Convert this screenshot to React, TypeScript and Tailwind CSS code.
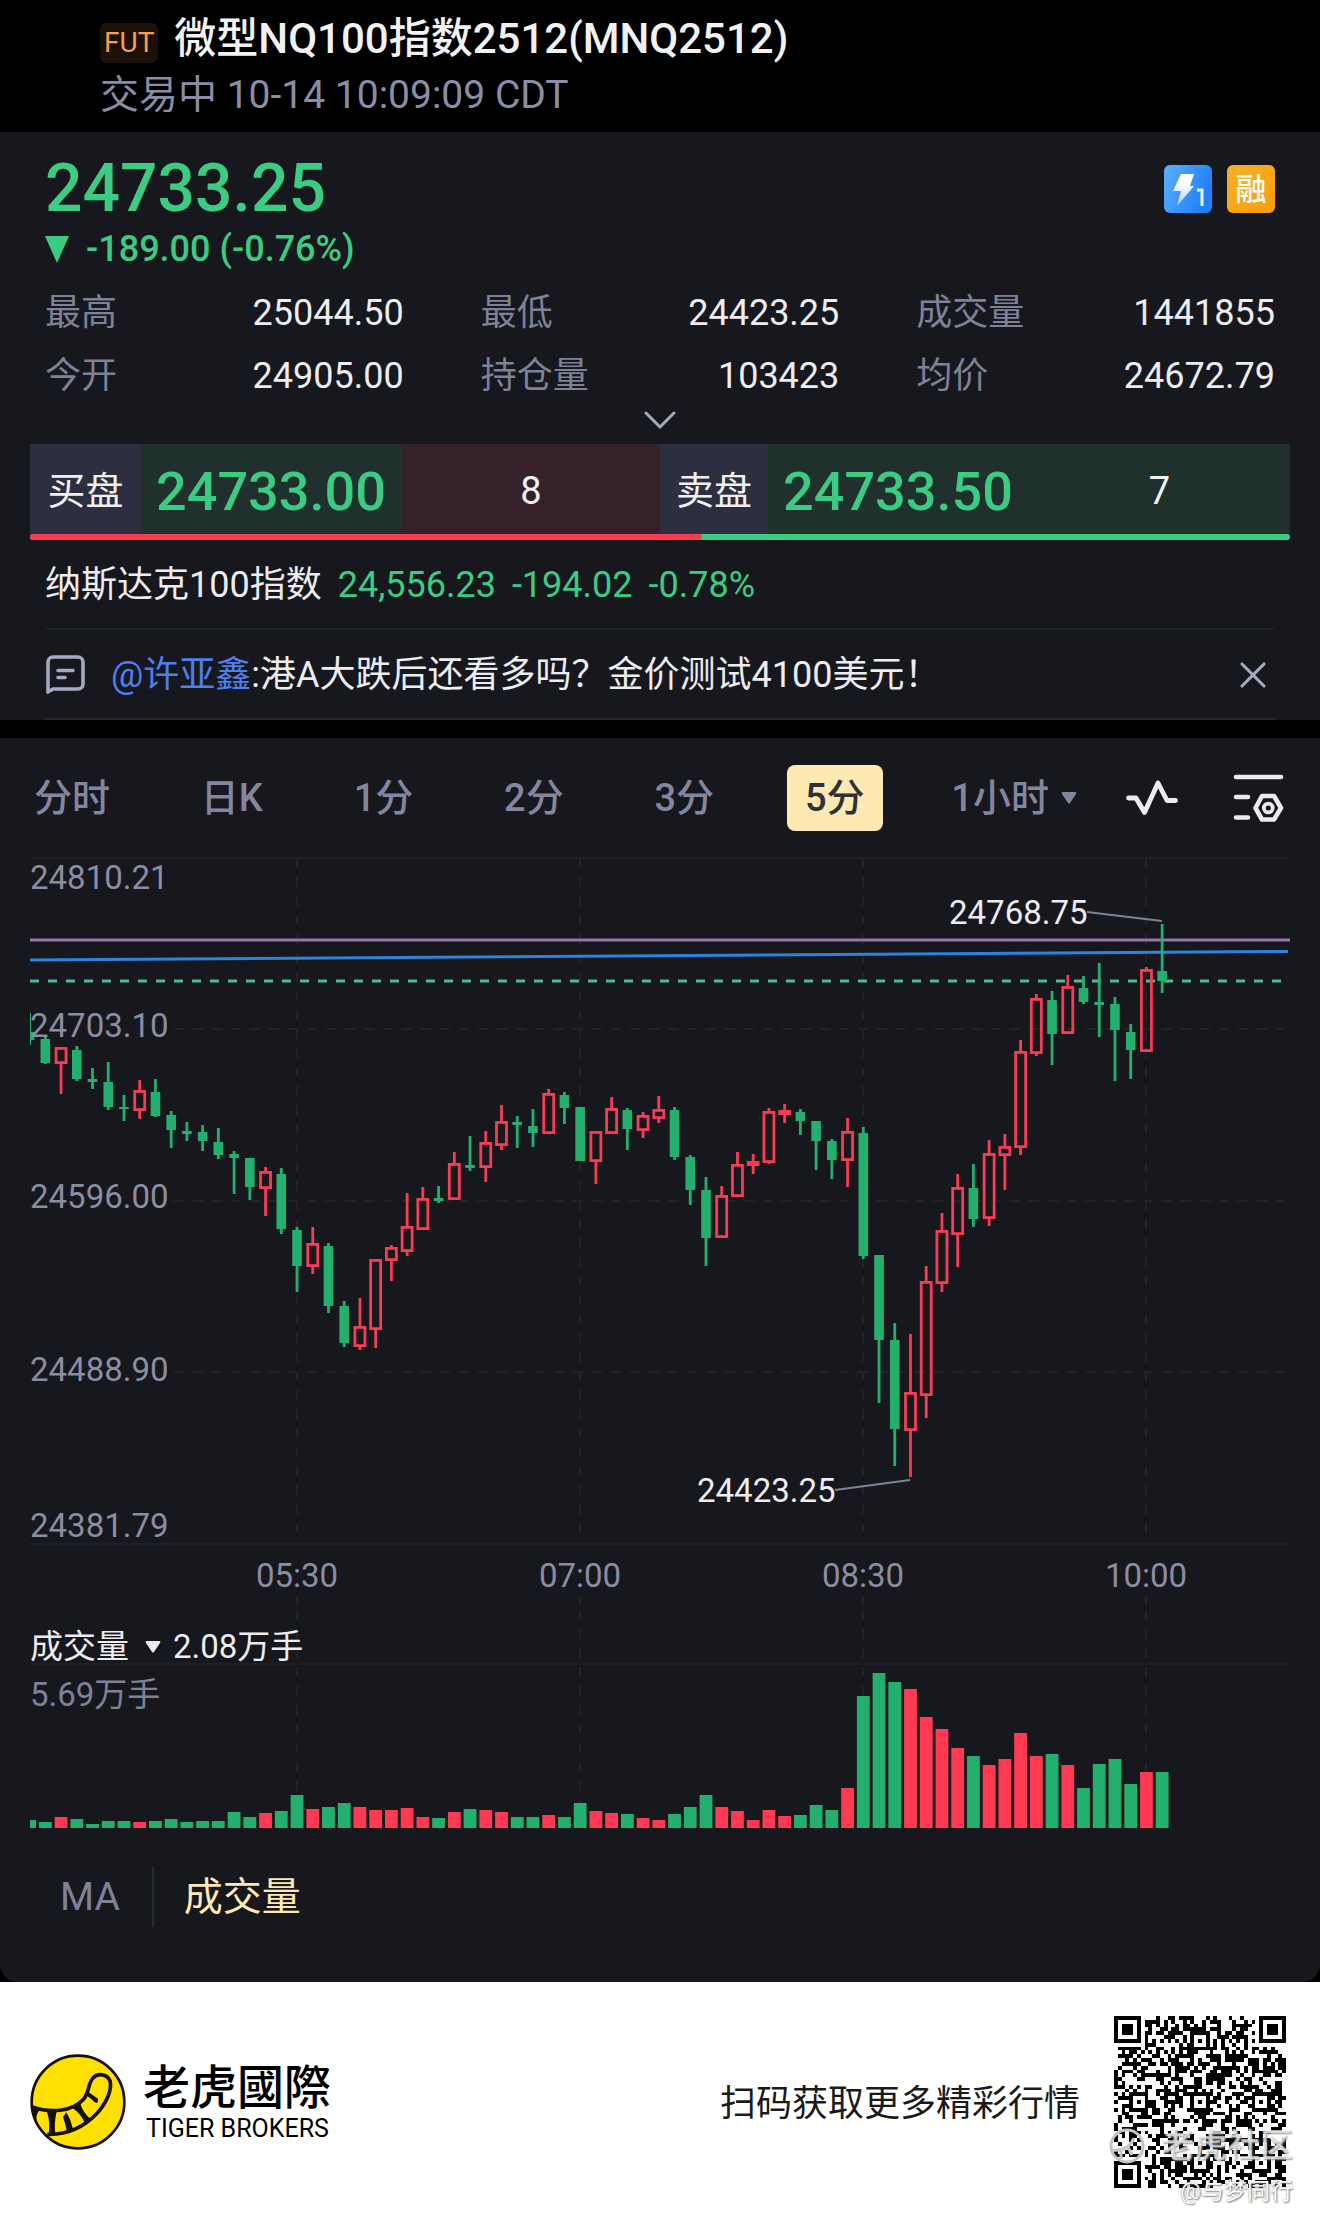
import { X } from 'lucide-react'

type Candle = {
  up?: boolean
  high: number
  top: number
  bottom: number
  low: number
  volume: number
}

const up = (high: number, top: number, bottom: number, low: number, volume: number): Candle => ({
  up: true,
  high,
  top,
  bottom,
  low,
  volume,
})

const down = (high: number, top: number, bottom: number, low: number, volume: number): Candle => ({
  high,
  top,
  bottom,
  low,
  volume,
})

// high, body top, body bottom, low, volume: all in chart units
const candles: Candle[] = [
  down(163, 182, 190, 195, 8),
  down(187, 189, 213, 214, 6),
  up(197, 197, 214, 244, 11),
  down(196, 200, 229, 231, 9),
  down(218, 229, 232, 239, 4),
  down(212, 232, 257, 260, 7),
  down(245, 257, 259, 271, 7),
  up(230, 240, 261, 269, 6),
  down(229, 242, 266, 267, 7),
  down(261, 265, 280, 298, 9),
  down(272, 281, 284, 291, 6),
  down(275, 282, 291, 301, 7),
  down(278, 292, 305, 309, 7),
  down(301, 304, 308, 344, 16),
  down(308, 308, 337, 350, 11),
  up(317, 321, 339, 366, 15),
  down(318, 324, 379, 384, 17),
  down(377, 380, 416, 442, 33),
  up(377, 393, 417, 424, 19),
  down(393, 396, 456, 463, 21),
  down(451, 456, 493, 497, 25),
  up(448, 476, 497, 500, 21),
  up(409, 409, 480, 498, 18),
  up(395, 397, 411, 431, 18),
  up(343, 376, 402, 406, 20),
  up(337, 348, 380, 380, 11),
  down(336, 348, 351, 353, 10),
  up(302, 313, 350, 350, 16),
  down(286, 315, 318, 321, 19),
  up(281, 292, 318, 332, 18),
  up(255, 271, 296, 300, 16),
  down(266, 272, 275, 298, 11),
  down(259, 276, 283, 297, 11),
  up(239, 243, 284, 284, 13),
  down(242, 245, 258, 274, 11),
  down(257, 257, 311, 311, 25),
  up(281, 281, 312, 334, 17),
  up(247, 258, 284, 284, 15),
  down(258, 260, 279, 300, 14),
  up(262, 265, 281, 288, 10),
  up(246, 259, 269, 273, 8),
  down(257, 260, 307, 310, 14),
  down(305, 307, 340, 355, 21),
  down(327, 340, 388, 416, 33),
  up(336, 345, 388, 388, 21),
  up(302, 314, 347, 347, 17),
  up(304, 311, 316, 324, 8),
  up(258, 261, 313, 314, 18),
  up(254, 260, 265, 273, 12),
  down(259, 262, 271, 285, 13),
  down(271, 271, 291, 320, 23),
  down(289, 291, 310, 329, 18),
  up(268, 281, 311, 337, 40),
  down(277, 283, 406, 409, 132),
  down(405, 405, 490, 553, 155),
  down(473, 490, 579, 616, 146),
  up(484, 542, 581, 627, 139),
  up(416, 431, 546, 568, 111),
  up(363, 380, 434, 442, 99),
  up(324, 337, 385, 417, 80),
  down(314, 338, 369, 377, 72),
  up(290, 303, 369, 376, 63),
  up(284, 296, 306, 340, 69),
  up(190, 201, 298, 305, 95),
  up(144, 148, 204, 206, 72),
  down(141, 150, 184, 215, 74),
  up(125, 136, 184, 184, 63),
  down(126, 138, 152, 154, 40),
  down(113, 152, 155, 187, 64),
  down(147, 154, 180, 231, 69),
  down(174, 182, 200, 229, 44),
  up(117, 119, 202, 202, 56),
  down(74, 121, 131, 143, 56),
]

const LEFT = 30
const RIGHT = 1290
const STEP = 15.73
const candleX = (i: number) => 29.6 + i * STEP

const stats = [
  { label: '最高', value: '25044.50' },
  { label: '最低', value: '24423.25' },
  { label: '成交量', value: '1441855' },
  { label: '今开', value: '24905.00' },
  { label: '持仓量', value: '103423' },
  { label: '均价', value: '24672.79' },
]

const periods = ['分时', '日K', '1分', '2分', '3分', '5分']

const priceLabels = [
  { text: '24810.21', y: 39 },
  { text: '24703.10', y: 187 },
  { text: '24596.00', y: 358 },
  { text: '24488.90', y: 531 },
  { text: '24381.79', y: 687 },
]

const times = [
  { text: '05:30', x: 297 },
  { text: '07:00', x: 580 },
  { text: '08:30', x: 863 },
  { text: '10:00', x: 1146 },
]

function Header() {
  return (
    <header className="flex h-[132px] flex-col pl-[100px] pt-3">
      <div className="flex h-[54px] items-center gap-4">
        <span className="mt-2 rounded-md bg-[#1c1107] px-1 text-[28px] leading-[40px] text-[#f7a04b]">FUT</span>
        <h1 className="whitespace-nowrap text-[42px] font-medium leading-[54px] text-[#f2f2f4]">
          微型NQ100指数2512(MNQ2512)
        </h1>
      </div>
      <p className="text-[39px] leading-[58px] text-[#8b8da6]">交易中 10-14 10:09:09 CDT</p>
    </header>
  )
}

function FlashBadge() {
  return (
    <svg viewBox="0 0 48 48" className="size-12" role="img" aria-label="L1">
      <defs>
        <linearGradient id="flash-bg" x1="0" y1="0" x2="1" y2="0.4">
          <stop offset="0" stopColor="#5db0ff" />
          <stop offset="1" stopColor="#1f80f8" />
        </linearGradient>
        <linearGradient id="flash-bolt" x1="0" y1="0" x2="0" y2="1">
          <stop offset="0.3" stopColor="#fff" />
          <stop offset="1" stopColor="#a9d2ff" />
        </linearGradient>
      </defs>
      <rect width="48" height="48" rx="6" fill="url(#flash-bg)" />
      <path d="M17 9h13l-4 12h4L13 41l4-15H9z" fill="url(#flash-bolt)" />
      <path d="M33 25h5v16" fill="none" stroke="#e8f3ff" strokeWidth="3" />
    </svg>
  )
}

function Quote() {
  return (
    <section className="px-[45px] pt-[21px]">
      <div className="flex items-start justify-between">
        <p className="text-[66px] font-medium leading-[72px] text-[#3bcc83]">24733.25</p>
        <div className="mt-3 flex gap-[15px]">
          <FlashBadge />
          <span className="flex size-12 items-center justify-center rounded-md bg-gradient-to-br from-[#f3b12a] to-[#fb9d00] text-[31px] font-medium leading-none text-white">
            融
          </span>
        </div>
      </div>
      <p className="flex h-[48px] items-center gap-[17px] text-[36px] font-medium text-[#3bcc83]">
        <svg viewBox="0 0 24 28" className="h-7 w-6" aria-hidden="true">
          <path d="M0 1h24L12 28z" fill="currentColor" />
        </svg>
        -189.00 (-0.76%)
      </p>
      <dl className="mt-1 grid grid-cols-3 gap-x-[77px] pt-1">
        {stats.map((s) => (
          <div key={s.label} className="flex h-[63px] items-center justify-between text-[36px]">
            <dt className="text-[#7f8198]">{s.label}</dt>
            <dd className="text-[#ececf1]">{s.value}</dd>
          </div>
        ))}
      </dl>
      <button type="button" aria-label="展开" className="mx-auto flex h-[37px] items-start pt-1 text-[#a7a9c0]">
        <svg viewBox="0 0 32 20" className="h-5 w-8" fill="none" stroke="currentColor" strokeWidth="3" strokeLinecap="round" strokeLinejoin="round">
          <path d="M2 2l14 14L30 2" />
        </svg>
      </button>
    </section>
  )
}

function OrderBook() {
  return (
    <section className="px-[30px]">
      <div className="grid h-[90px] grid-cols-2 text-[38px] text-[#f0f0f3]">
        <div className="flex items-stretch">
          <span className="flex w-[111px] items-center justify-center bg-[#2d2e40] pt-1">买盘</span>
          <span className="flex w-[261px] items-center bg-[#20302d] pl-[15px] pt-1 text-[54px] font-medium text-[#3bcc83]">
            24733.00
          </span>
          <span className="flex flex-1 items-center justify-center bg-[#36212a] pt-1">8</span>
        </div>
        <div className="flex items-stretch">
          <span className="flex w-[108px] items-center justify-center bg-[#2d2e40] pt-1">卖盘</span>
          <span className="flex w-[261px] items-center bg-[#20302d] pl-[15px] pt-1 text-[54px] font-medium text-[#3bcc83]">
            24733.50
          </span>
          <span className="flex flex-1 items-center justify-center bg-[#20302d] pt-1">7</span>
        </div>
      </div>
      <div className="flex h-[6px] overflow-hidden rounded-full bg-[#3bcc83]">
        <div className="w-[53.3%] rounded-r-full bg-[#fb3a55]" />
      </div>
    </section>
  )
}

function News() {
  return (
    <section className="px-[45px] text-[36px]">
      <div className="flex h-[90px] items-center gap-4 whitespace-nowrap border-b-2 border-[#1f2128] pt-[2px] text-[#3bcc83]">
        <span className="text-[#ececf1]">纳斯达克100指数</span>
        <span>24,556.23</span>
        <span>-194.02</span>
        <span>-0.78%</span>
      </div>
      <div className="flex h-[90px] items-center border-b-2 border-[#23252b] pt-[2px]">
        <svg viewBox="0 0 40 40" className="size-10 shrink-0" fill="none" stroke="#a7a9c4" strokeWidth="3.6" aria-hidden="true">
          <path d="M3 37V7a5 5 0 0 1 5-5h25a5 5 0 0 1 5 5v22a5 5 0 0 1-5 5H8z" strokeLinejoin="round" />
          <path d="M13 15.500h15M13 22.500h7" strokeLinecap="round" />
        </svg>
        <p className="ml-[26px] flex-1 whitespace-nowrap text-[#ececf1]">
          <a href="#author" className="text-[#4d7ff0]">
            @许亚鑫
          </a>
          :港A大跌后还看多吗？金价测试4100美元！
        </p>
        <button type="button" aria-label="关闭" className="text-[#a7a9c0]">
          <X size={44} strokeWidth={1.7} />
        </button>
      </div>
    </section>
  )
}

function Periods() {
  return (
    <nav className="flex items-center pb-[19px] pl-4 pr-9 pt-[27px] text-[38px] font-medium text-[#8486a0]">
      <div className="flex flex-1 items-center justify-between">
        {periods.map((p) => (
          <button
            key={p}
            type="button"
            className={
              p === '5分'
                ? 'h-[66px] rounded-lg bg-[#ffe9b2] px-[18px] text-[#303038]'
                : 'h-[66px] rounded-lg px-[18px]'
            }
          >
            {p}
          </button>
        ))}
        <button type="button" className="flex h-[66px] items-center gap-3 pl-[14px] pr-[18px]">
          1小时
          <svg viewBox="0 0 16 12" className="h-3 w-4" aria-hidden="true">
            <path d="M2 0h12q2 0 1 2l-6 9q-1 1-2 0L1 2Q0 0 2 0z" fill="currentColor" />
          </svg>
        </button>
      </div>
      <button type="button" aria-label="指标" className="ml-[31px]">
        <svg viewBox="0 0 52 36" className="h-9 w-[52px]" fill="none" stroke="#ececef" strokeWidth="4.8" strokeLinecap="round" strokeLinejoin="round">
          <path d="M2.500 18h7.500l8.500 14.500L32 3l9 17.500h8.500" />
        </svg>
      </button>
      <button type="button" aria-label="设置" className="ml-[55px]">
        <svg viewBox="0 0 51 48" className="h-12 w-[51px]" fill="none" stroke="#ececef" strokeWidth="4.6" strokeLinecap="round" strokeLinejoin="round">
          <path d="M3 3h45M3 23h12M3 43.500h12M29 22h12l7 12-7 11.500H29L22.500 34z" />
          <circle cx="35.300" cy="34" r="4.400" strokeWidth="3.800" />
        </svg>
      </button>
    </nav>
  )
}

function PriceChart() {
  return (
    <svg viewBox="0 0 1320 760" className="block w-full" role="img" aria-label="K线图">
      <g stroke="#212329" strokeWidth="2">
        <path d={`M${LEFT} 8H${RIGHT}M${LEFT} 694H${RIGHT}`} stroke="#1e2026" />
        {[179, 351, 522].map((y) => (
          <line key={y} x1="174" x2="1284" y1={y} y2={y} strokeDasharray="10 9" />
        ))}
        {times.map((t) => (
          <path key={t.text} d={`M${t.x} 8V694M${t.x} 746V760`} strokeDasharray="10 9" />
        ))}
      </g>
      <path d="M30 90H1290" stroke="#9a72ad" strokeWidth="3" />
      <path d="M30 110Q600 105 1288 101.500" fill="none" stroke="#2b84de" strokeWidth="3" />
      <path d="M30 131H1284" stroke="#49bd8c" strokeWidth="3" strokeDasharray="9 9" />

      <clipPath id="plot">
        <rect x={LEFT} y="0" width={RIGHT - LEFT} height="700" />
      </clipPath>
      <g clipPath="url(#plot)">
        {candles.map((c, i) => {
          const x = candleX(i)
          const color = c.up ? '#f73c56' : '#23b06e'
          return (
            <g key={i} stroke={color} strokeWidth="2.8" fill="none">
              <path d={`M${x} ${c.high}V${c.top}M${x} ${c.bottom}V${c.low}`} />
              {c.up ? (
                <rect x={x - 5} y={c.top + 1.4} width="10" height={c.bottom - c.top - 2.8} />
              ) : (
                <rect x={x - 4.8} y={c.top} width="9.6" height={c.bottom - c.top} fill={color} stroke="none" />
              )}
            </g>
          )
        })}
      </g>

      <g fontSize="33" fill="#8b8da3">
        {priceLabels.map((l) => (
          <text key={l.text} x="30" y={l.y}>
            {l.text}
          </text>
        ))}
        {times.map((t) => (
          <text key={t.text} x={t.x} y="737" textAnchor="middle">
            {t.text}
          </text>
        ))}
      </g>
      <g fontSize="33" fill="#ececf1">
        <text x="949" y="74">
          24768.75
        </text>
        <text x="697" y="652">
          24423.25
        </text>
      </g>
      <path d="M1087 62L1162 71M835 640L910 630" stroke="#7f8198" strokeWidth="2" />
    </svg>
  )
}

function VolumeChart() {
  return (
    <div className="relative">
      <svg viewBox="0 0 1320 220" className="block w-full" role="img" aria-label="成交量图">
        <g stroke="#212329" strokeWidth="2">
          {times.map((t) => (
            <path key={t.text} d={`M${t.x} 0V218`} strokeDasharray="10 9" />
          ))}
          <path d="M30 54H1290" stroke="#1e2026" />
        </g>
        <text x="30" y="96" fontSize="33" fill="#7f8198">
          5.69万手
        </text>
        {candles.map((c, i) => {
          const x = Math.max(LEFT, candleX(i) - 6.4)
          return (
            <rect
              key={i}
              x={x}
              y={218 - c.volume}
              width={candleX(i) + 6.4 - x}
              height={c.volume}
              fill={c.up ? '#ff3a52' : '#23b06e'}
            />
          )
        })}
      </svg>
      <div className="absolute left-[30px] top-[13px] flex h-12 items-center text-[33px] text-[#ececf1]">
        <button type="button" className="flex items-center gap-4">
          成交量
          <svg viewBox="0 0 16 12" className="h-3 w-4" aria-hidden="true">
            <path d="M2 0h12q2 0 1 2l-6 9q-1 1-2 0L1 2Q0 0 2 0z" fill="currentColor" />
          </svg>
        </button>
        <span className="ml-3">2.08万手</span>
      </div>
    </div>
  )
}

function Indicators() {
  return (
    <div className="flex h-[152px] items-center pb-[18px] pl-[60px] text-[39px]">
      <button type="button" className="text-[#7f8198]">
        MA
      </button>
      <span className="ml-8 h-[60px] w-[2px] bg-[#292b32]" />
      <button type="button" className="ml-[30px] text-[#ffe9b2]">
        成交量
      </button>
    </div>
  )
}

function TigerLogo() {
  return (
    <svg viewBox="90 71 288 288" className="size-24" aria-hidden="true">
      <circle cx="234" cy="215" r="139" fill="#ffe000" stroke="#16110a" strokeWidth="8" />
      <path
        d="M96 230C150 248 215 246 252 205C268 184 264 160 278 144C293 126 322 132 330 151C337 178 320 216 292 248C255 287 205 314 142 312"
        fill="none"
        stroke="#16110a"
        strokeWidth="11"
      />
      <path
        d="M92 224L119 238Q106 254 110 272Q96 250 92 224zM140 242L170 243Q162 276 166 312L146 312Q152 276 140 242zM189 260L199 246Q214 270 219 296L200 302Q196 280 189 260zM218 233L241 220Q249 246 272 267L255 279Q242 250 218 233zM256 193L264 184L294 205L293 218L284 216Q272 202 256 193z"
        fill="#16110a"
      />
    </svg>
  )
}

const QR_SIZE = 45

const ring = (x: number, y: number, cx: number, cy: number) => Math.max(Math.abs(x - cx), Math.abs(y - cy))

function qrModule(x: number, y: number) {
  for (const [cx, cy] of [
    [3, 3],
    [41, 3],
    [3, 41],
  ]) {
    const d = ring(x, y, cx, cy)
    if (d <= 4) return d <= 1 || d === 3
  }
  for (const [cx, cy] of [
    [22, 6],
    [6, 22],
    [22, 22],
    [38, 22],
    [22, 38],
    [38, 38],
  ]) {
    const d = ring(x, y, cx, cy)
    if (d <= 2) return d !== 1
  }
  if (x === 6) return y % 2 === 0
  if (y === 6) return x % 2 === 0
  const n = Math.sin(x * 127.1 + y * 311.7) * 43758.5453
  return n - Math.floor(n) > 0.48
}

const qrPath = Array.from({ length: QR_SIZE * QR_SIZE }, (_, i) => {
  const x = i % QR_SIZE
  const y = Math.floor(i / QR_SIZE)
  return qrModule(x, y) ? `M${x} ${y}h1v1h-1z` : ''
}).join('')

function Footer() {
  return (
    <footer className="flex h-[240px] items-center justify-between bg-white pl-[30px] pr-[34px] text-black">
      <div className="flex items-center gap-[17px]">
        <TigerLogo />
        <div className="flex flex-col pt-1">
          <span className="text-[47px] font-medium leading-[50px]">老虎國際</span>
          <span className="pl-[3px] text-[25px] leading-[32px]">TIGER BROKERS</span>
        </div>
      </div>
      <div className="flex items-center gap-[34px]">
        <p className="whitespace-nowrap pt-1 text-[36px] text-[#1a1a1a]">扫码获取更多精彩行情</p>
        <div className="relative">
          <svg viewBox="0 0 45 45" className="size-[172px]" shapeRendering="crispEdges" role="img" aria-label="二维码">
            <path d={qrPath} />
          </svg>
          <span className="absolute -right-[7px] top-[106px] flex items-center gap-4 whitespace-nowrap text-[33px] font-medium leading-[48px] text-white/60 [text-shadow:1px_1px_2px_#9a9a9a]">
            <svg viewBox="0 0 36 36" className="size-9" fill="none" stroke="#c4c4c8" strokeWidth="3" aria-hidden="true">
              <circle cx="18" cy="18" r="16" />
              <path d="M3 22q16 2 22-12M12 22v9M19 19l4 8" />
            </svg>
            老虎社区
          </span>
          <span className="absolute -right-[7px] top-[160px] whitespace-nowrap text-[23px] leading-8 text-white [text-shadow:1px_1px_2px_#777,0_0_1px_#777]">
            @与梦同行
          </span>
        </div>
      </div>
    </footer>
  )
}

export default function App() {
  return (
    <div className="min-w-[1200px] bg-black font-['Roboto','Noto_Sans_CJK_SC',sans-serif]">
      <Header />
      <main>
        <div className="bg-[#17181d]">
          <Quote />
          <OrderBook />
          <News />
        </div>
        <div className="mt-[18px] rounded-b-[18px] bg-[#17181d]">
          <Periods />
          <PriceChart />
          <VolumeChart />
          <Indicators />
        </div>
      </main>
      <Footer />
    </div>
  )
}
